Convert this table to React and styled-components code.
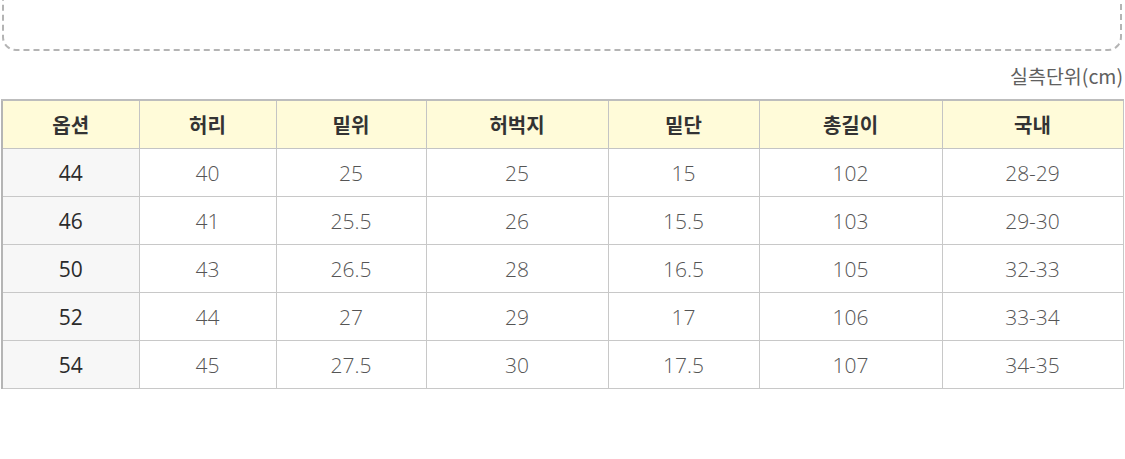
import React from "react";
import styled, { createGlobalStyle } from "styled-components";

const GlobalStyle = createGlobalStyle`
  html, body {
    margin: 0;
    padding: 0;
    background: #ffffff;
  }
  body {
    font-family: "Noto Sans CJK KR", "Noto Sans", sans-serif;
  }
`;

const Page = styled.div`
  width: 1125px;
  height: 459px;
  overflow: hidden;
  box-sizing: border-box;
`;

const NoteBox = styled.div`
  margin: -40px 3px 0 2px;
  height: 91px;
  box-sizing: border-box;
  border: 2px dashed #b4b4b4;
  border-top: none;
  border-radius: 0 0 14px 14px;
`;

const Unit = styled.div`
  display: flex;
  justify-content: flex-end;
  padding: 12px 2px 0 0;
  height: 48px;
  box-sizing: border-box;
  font-size: 19.5px;
  line-height: 26px;
  color: #606060;
`;

const Table = styled.table`
  margin-left: 1px;
  width: 1121px;
  border-collapse: collapse;
  table-layout: fixed;
  border-left: 2px solid #b5b5b5;
`;

const Th = styled.th`
  height: 47px;
  padding: 0;
  background: #fffbd9;
  border: 1px solid #c4c4c4;
  border-top: 2px solid #bdbdbd;
  font-size: 20px;
  font-weight: 700;
  color: #333;
  text-align: center;
  vertical-align: middle;
`;

const Td = styled.td`
  height: 47px;
  padding: 0;
  border: 1px solid #c8c8c8;
  background: ${(p) => (p.$option ? "#f7f7f7" : "#ffffff")};
  color: ${(p) => (p.$option ? "#2b2b2b" : "#555")};
  font-family: "Open Sans", "Noto Sans CJK KR", sans-serif;
  font-size: 21px;
  font-weight: ${(p) => (p.$option ? 400 : 300)};
  text-align: center;
  vertical-align: middle;
`;

const columns = [
  { label: "옵션", width: 137 },
  { label: "허리", width: 137 },
  { label: "밑위", width: 150 },
  { label: "허벅지", width: 182 },
  { label: "밑단", width: 151 },
  { label: "총길이", width: 183 },
  { label: "국내", width: 181 },
];

const rows = [
  ["44", "40", "25", "25", "15", "102", "28-29"],
  ["46", "41", "25.5", "26", "15.5", "103", "29-30"],
  ["50", "43", "26.5", "28", "16.5", "105", "32-33"],
  ["52", "44", "27", "29", "17", "106", "33-34"],
  ["54", "45", "27.5", "30", "17.5", "107", "34-35"],
];

export default function App() {
  return (
    <Page>
      <GlobalStyle />
      <NoteBox />
      <Unit>실측단위(cm)</Unit>
      <Table>
        <colgroup>
          {columns.map((c) => (
            <col key={c.label} style={{ width: c.width }} />
          ))}
        </colgroup>
        <thead>
          <tr>
            {columns.map((c) => (
              <Th key={c.label}>{c.label}</Th>
            ))}
          </tr>
        </thead>
        <tbody>
          {rows.map((r) => (
            <tr key={r[0]}>
              {r.map((v, i) => (
                <Td key={i} $option={i === 0}>
                  {v}
                </Td>
              ))}
            </tr>
          ))}
        </tbody>
      </Table>
    </Page>
  );
}
